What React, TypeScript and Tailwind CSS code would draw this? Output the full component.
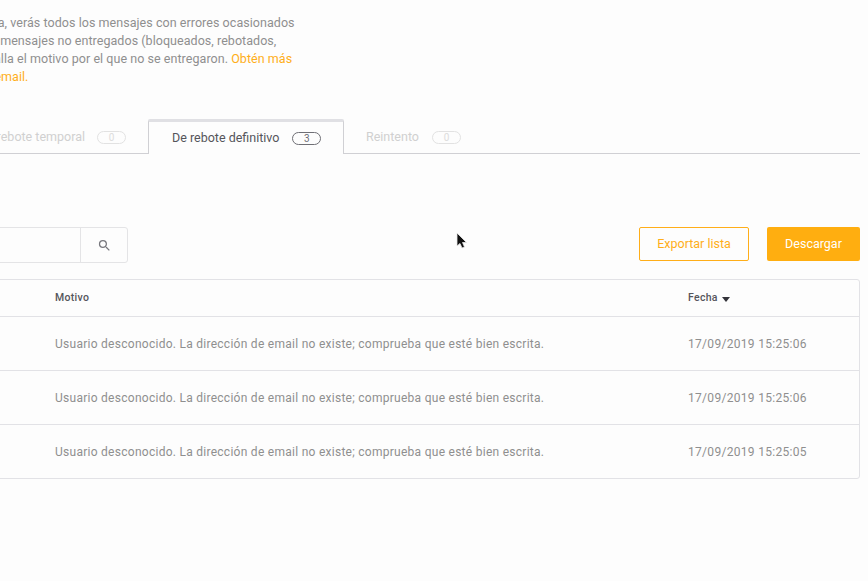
import { MdSearch } from "react-icons/md";

const filas = [
  { motivo: "Usuario desconocido. La dirección de email no existe; comprueba que esté bien escrita.", fecha: "17/09/2019 15:25:06" },
  { motivo: "Usuario desconocido. La dirección de email no existe; comprueba que esté bien escrita.", fecha: "17/09/2019 15:25:06" },
  { motivo: "Usuario desconocido. La dirección de email no existe; comprueba que esté bien escrita.", fecha: "17/09/2019 15:25:05" },
];

function Contador({ n, activo }: { n: number; activo?: boolean }) {
  return (
    <span
      className={
        activo
          ? "flex h-[13px] w-[29px] items-center justify-center rounded-full border border-[#6f6f75] text-[10px] text-[#6f6f75]"
          : "flex h-[13px] w-[29px] items-center justify-center rounded-full border border-[#e2e2e2] text-[10px] text-[#dcdcdc]"
      }
    >
      {n}
    </span>
  );
}

export default function App() {
  return (
    <div className="relative h-[581px] w-[868px] overflow-hidden bg-[#fdfdfd] font-['Roboto',sans-serif]">
      <div className="ml-[-120px] w-[980px]">
        {/* Intro */}
        <div className="h-[119px] pt-[14px] text-[12.5px] leading-[18px] tracking-[0.05px] text-[#8f8f8f]">
          <p className="ml-[35px] whitespace-nowrap">En esta pestaña, verás todos los mensajes con errores ocasionados</p>
          <p className="ml-[56px] whitespace-nowrap">y todos los mensajes no entregados (bloqueados, rebotados,</p>
          <p className="ml-[31px] whitespace-nowrap">y en ella se detalla el motivo por el que no se entregaron. <a className="text-[#ffae19]">Obtén más</a></p>
          <p className="ml-[-4px] whitespace-nowrap text-[#ffae19]">información sobre el email.</p>
        </div>

        {/* Tabs */}
        <div className="flex h-[35px] items-stretch border-b border-[#d0d0d4] text-[12.5px]">
          <div className="flex w-[268px] items-center justify-end gap-3 pt-[2px] pr-[22px] text-[#d0d0d0]">
            <span>De rebote temporal</span>
            <Contador n={0} />
          </div>
          <div className="mb-[-1px] flex w-[196px] items-center gap-[13px] rounded-t-[2px] border-x border-t-[3px] border-x-[#d0d0d4] border-t-[#e0e0e4] bg-[#fdfdfd] pt-[1px] pl-[23px] text-[#55555b]">
            <span>De rebote definitivo</span>
            <Contador n={3} activo />
          </div>
          <div className="flex items-center gap-[13px] pt-[2px] pl-[22px] text-[#d0d0d0]">
            <span>Reintento</span>
            <Contador n={0} />
          </div>
        </div>

        {/* Toolbar */}
        <div className="mt-[73px] flex h-[36px] items-start justify-between">
          <div className="flex h-[36px] w-[248px] rounded-[3px] border border-[#e4e4e6]">
            <div className="flex-1 border-r border-[#e4e4e6]" />
            <div className="flex w-[46px] items-center justify-center text-[#77777d]">
              <MdSearch size={15} />
            </div>
          </div>
          <div className="flex gap-[18px] text-[12.5px]">
            <button className="h-[34px] w-[110px] rounded-[2px] border border-[#ffae19] text-[#ffae19]">Exportar lista</button>
            <button className="h-[34px] w-[93px] rounded-[2px] bg-[#ffae10] text-white">Descargar</button>
          </div>
        </div>

        {/* Table */}
        <div className="mt-[16px] rounded-[3px] border border-[#e2e2e6]">
          <div className="flex h-[37px] items-center border-b border-[#e2e2e6] text-[10.5px] font-medium tracking-[0.3px] text-[#55555b]">
            <div className="w-[174px]" />
            <div className="flex-1">Motivo</div>
            <div className="flex w-[171px] items-center gap-[4px]">
              Fecha
              <span className="mt-[2px] h-0 w-0 border-x-[4.5px] border-t-[5px] border-x-transparent border-t-[#33333a]" />
            </div>
          </div>
          {filas.map((f, i) => (
            <div
              key={i}
              className={
                i < filas.length - 1
                  ? "flex h-[54px] items-center border-b border-[#e2e2e6] text-[12px] text-[#8f8f8f]"
                  : "flex h-[53px] items-center text-[12px] text-[#8f8f8f]"
              }
            >
              <div className="w-[174px]" />
              <div className="flex-1 tracking-[0.27px]">{f.motivo}</div>
              <div className="w-[171px] tracking-[0.3px]">{f.fecha}</div>
            </div>
          ))}
        </div>
      </div>

      {/* Cursor */}
      <svg className="absolute left-[455px] top-[232px]" width="14" height="19" viewBox="0 0 14 19">
        <path d="M2 1 L2 14 L5 11.5 L7 16 L9.5 15 L7.5 10.5 L11.5 10.5 Z" fill="#111" stroke="#e8e8e8" strokeWidth="0.8" />
      </svg>
    </div>
  );
}
